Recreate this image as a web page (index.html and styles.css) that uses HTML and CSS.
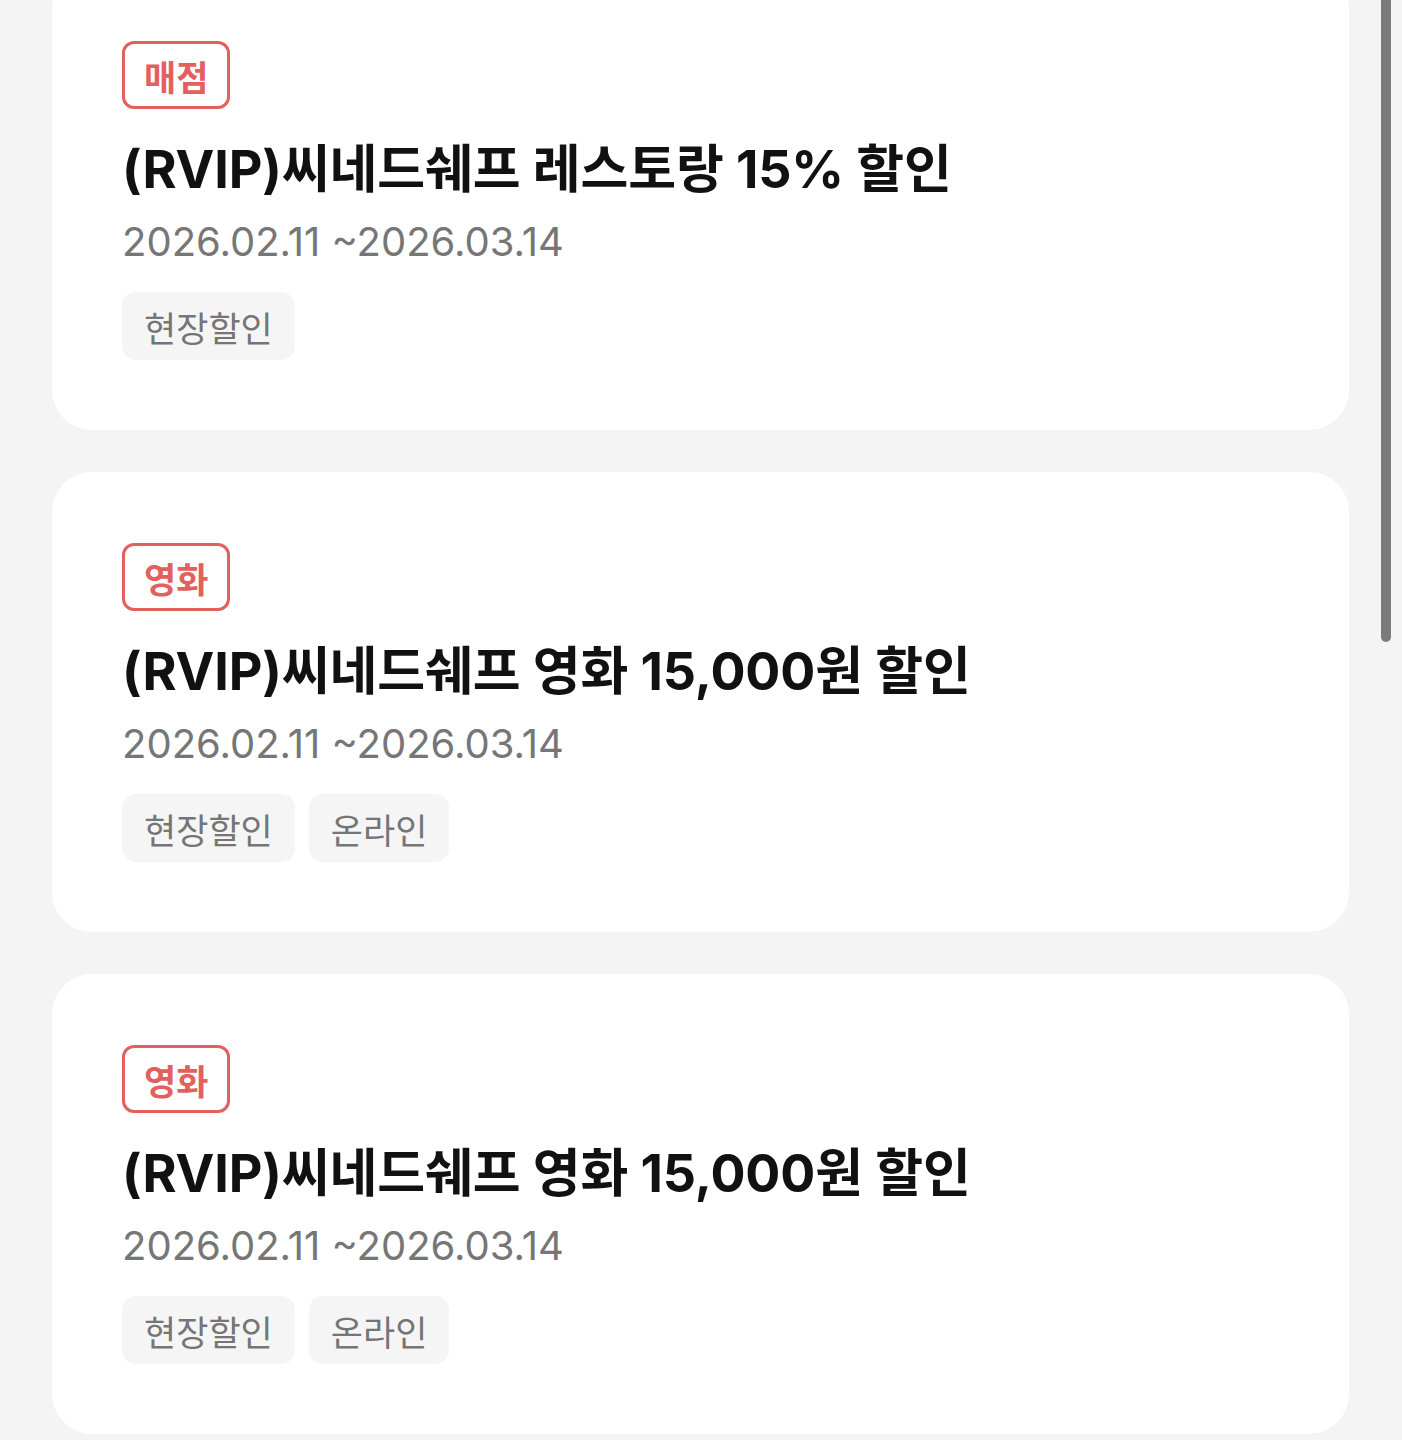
FILE: index.html
```html
<!DOCTYPE html>
<html lang="ko">
<head>
  <meta charset="UTF-8">
  <meta name="viewport" content="width=device-width, initial-scale=1">
  <title>혜택 목록</title>
  <link rel="stylesheet" href="styles.css">
</head>
<body>
  <div class="benefit-list">
    <div class="card">
      <span class="category">매점</span>
      <h2 class="title">(RVIP)씨네드쉐프 레스토랑 15% 할인</h2>
      <p class="period">2026.02.11 ~2026.03.14</p>
      <div class="tags">
        <span class="tag">현장할인</span>
      </div>
    </div>

    <div class="card">
      <span class="category">영화</span>
      <h2 class="title">(RVIP)씨네드쉐프 영화 15,000원 할인</h2>
      <p class="period">2026.02.11 ~2026.03.14</p>
      <div class="tags">
        <span class="tag">현장할인</span>
        <span class="tag">온라인</span>
      </div>
    </div>

    <div class="card">
      <span class="category">영화</span>
      <h2 class="title">(RVIP)씨네드쉐프 영화 15,000원 할인</h2>
      <p class="period">2026.02.11 ~2026.03.14</p>
      <div class="tags">
        <span class="tag">현장할인</span>
        <span class="tag">온라인</span>
      </div>
    </div>
  </div>

  <div class="scroll-thumb"></div>
</body>
</html>
```

FILE: styles.css
```css
html, body {
  height: 100%;
}

body {
  margin: 0;
  background: #f4f4f4;
  font-family: "Inter", "Noto Sans CJK KR", sans-serif;
  color: #111;
  overflow: hidden;
}

.benefit-list {
  display: flex;
  flex-direction: column;
  gap: 42px;
  margin-top: -30px;
  padding: 0 53px 0 52px;
}

.card {
  background: #fff;
  border-radius: 40px;
  padding: 71px 70px 70px;
  display: flex;
  flex-direction: column;
  align-items: flex-start;
}

.category {
  display: inline-flex;
  align-items: center;
  box-sizing: border-box;
  height: 68px;
  padding: 0 19px;
  border: 3px solid #e2605e;
  border-radius: 12px;
  color: #e2605e;
  font-size: 35px;
  font-weight: 700;
}

.title {
  margin: 26px 0 0;
  font-size: 52px;
  line-height: 70px;
  font-weight: 700;
  letter-spacing: -0.1px;
  color: #111;
}

.period {
  margin: 12px 0 0;
  font-size: 40px;
  line-height: 50px;
  color: #767676;
}

.tags {
  display: flex;
  gap: 14px;
  margin-top: 25px;
}

.tag {
  display: inline-flex;
  align-items: center;
  height: 68px;
  padding: 0 22px;
  border-radius: 14px;
  background: #f5f5f5;
  color: #757575;
  font-size: 35px;
}

.scroll-thumb {
  position: fixed;
  top: 0;
  right: 11px;
  width: 10px;
  height: 642px;
  background: #7b7b7b;
  border-radius: 0 0 5px 5px;
}
```
